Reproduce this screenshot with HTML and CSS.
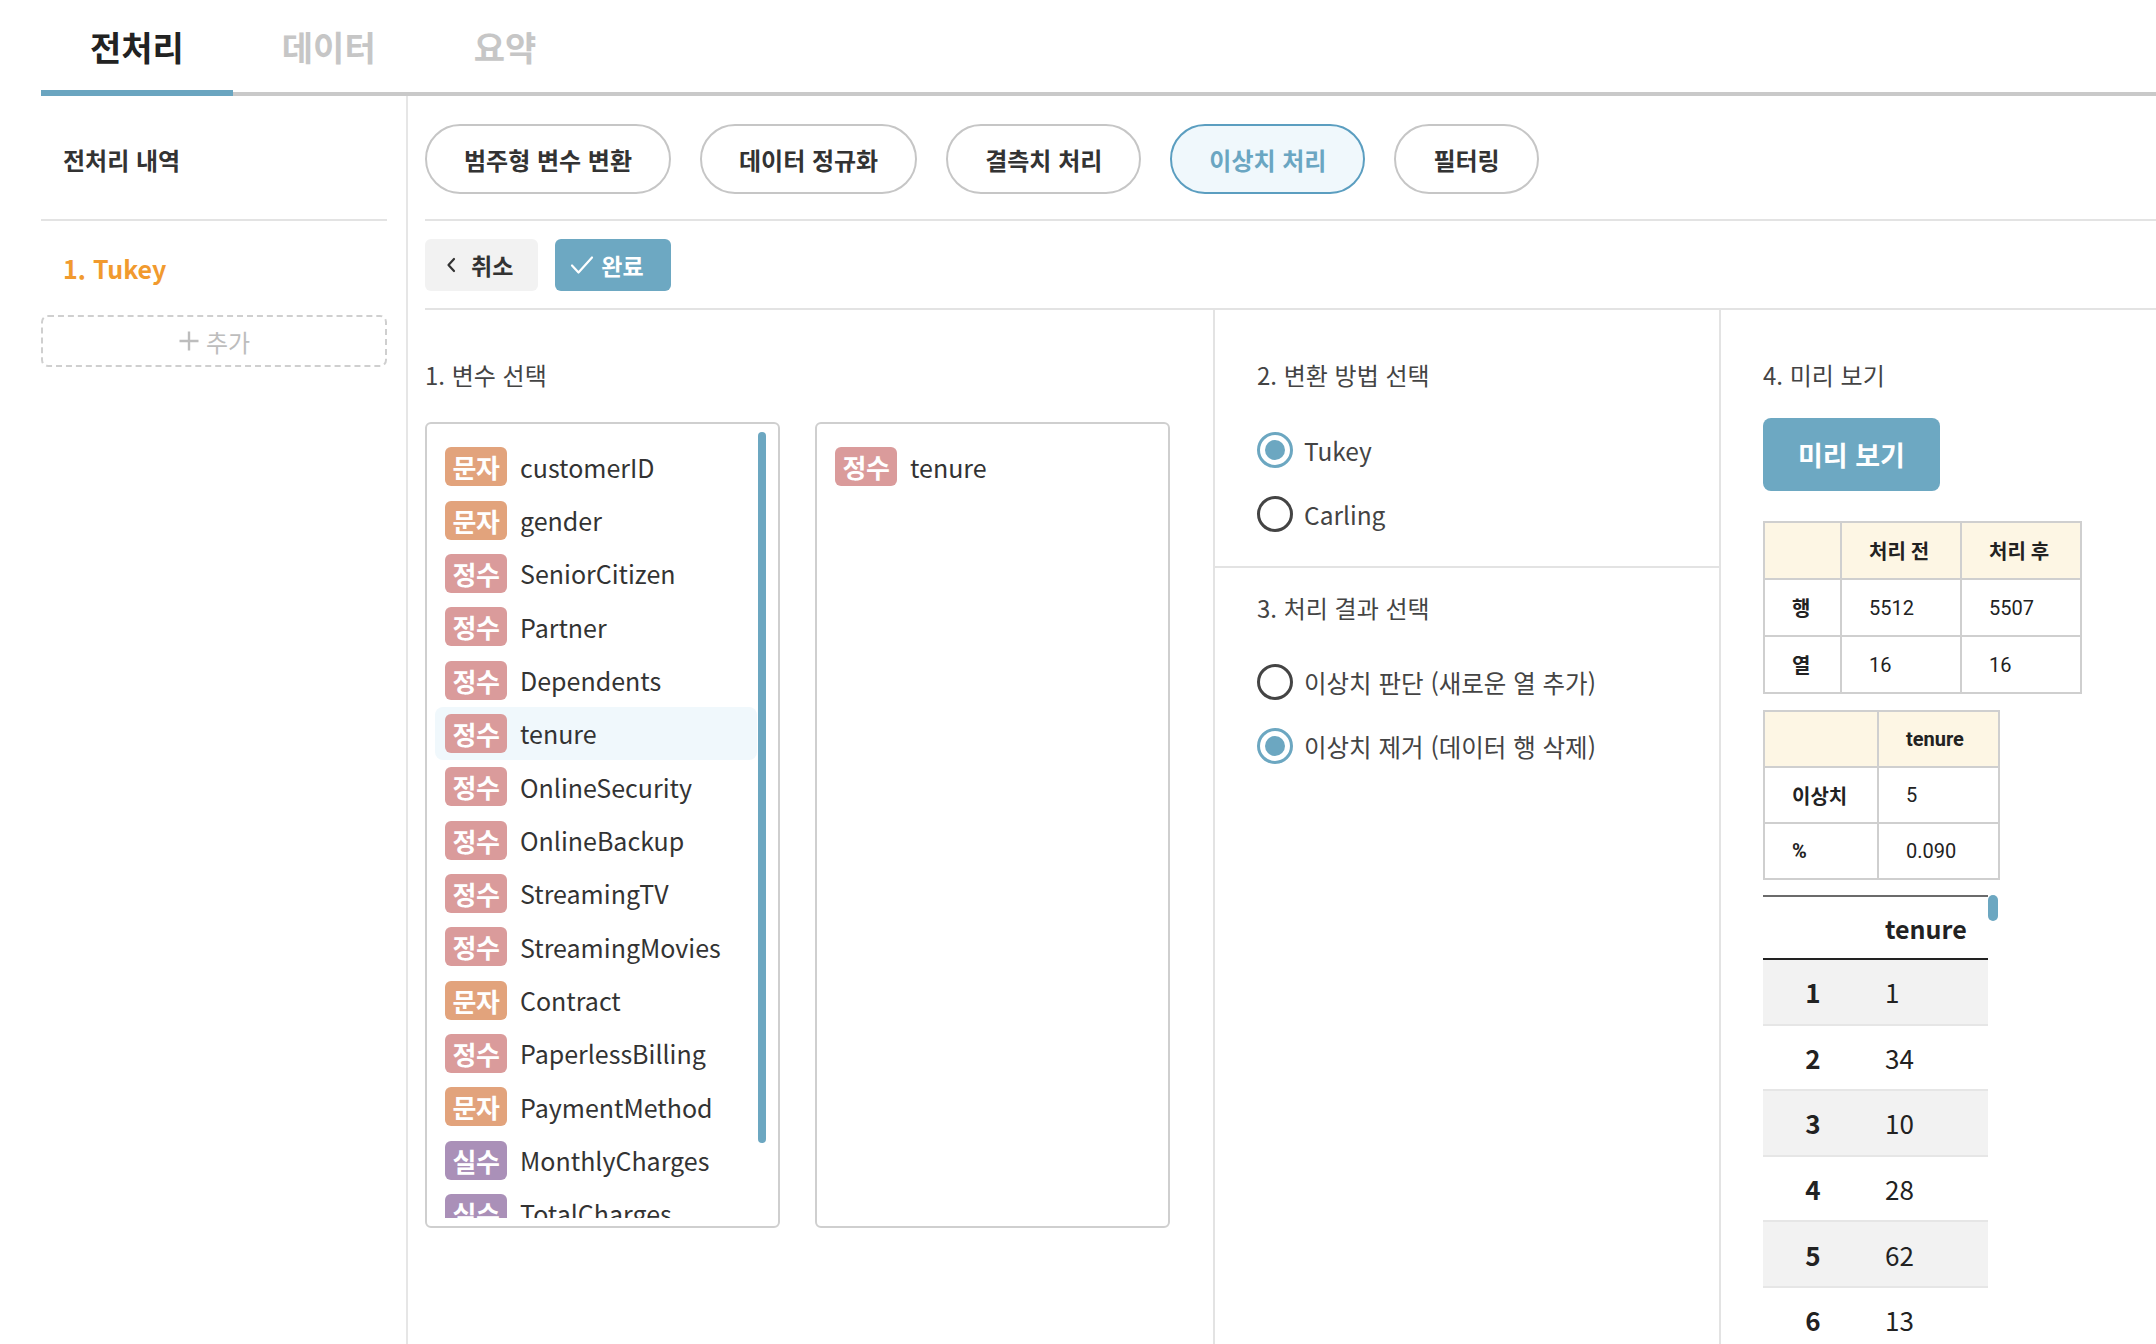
FILE: index.html
```html
<!DOCTYPE html>
<html lang="ko">
<head>
<meta charset="utf-8">
<title>전처리</title>
<link rel="stylesheet" href="styles.css">
</head>
<body>
<div class="app">
  <nav class="tabs">
    <div class="tab active">전처리</div>
    <div class="tab">데이터</div>
    <div class="tab">요약</div>
  </nav>
  <div class="body">
    <aside class="sidebar">
      <div class="side-head">전처리 내역</div>
      <div class="side-item">1. Tukey</div>
      <div class="add-box">
        <svg class="plus" width="22" height="22" viewBox="0 0 22 22"><path d="M11 1.5v19M1.5 11h19" stroke="#bdbdbd" stroke-width="2.4" fill="none"/></svg>
        <span>추가</span>
      </div>
    </aside>
    <main class="main">
      <div class="toolbar">
        <div class="pill">범주형 변수 변환</div>
        <div class="pill">데이터 정규화</div>
        <div class="pill">결측치 처리</div>
        <div class="pill active">이상치 처리</div>
        <div class="pill">필터링</div>
      </div>
      <div class="actions">
        <div class="btn btn-cancel">
          <svg width="10" height="16" viewBox="0 0 10 16"><polyline points="8,2 2.5,8 8,14" fill="none" stroke="#333" stroke-width="2.2" stroke-linecap="round" stroke-linejoin="round"/></svg>
          <span>취소</span>
        </div>
        <div class="btn btn-done">
          <svg width="24" height="20" viewBox="0 0 24 20"><polyline points="2,10.5 8.5,17.5 22,2.5" fill="none" stroke="#fff" stroke-width="2.2" stroke-linecap="round" stroke-linejoin="round"/></svg>
          <span>완료</span>
        </div>
      </div>
      <div class="columns">
        <section class="col col-vars">
          <h3 class="sec-title">1. 변수 선택</h3>
          <div class="boxes">
            <div class="vbox">
              <div class="scroller">
                <div class="vitem"><span class="badge str">문자</span><span class="vname">customerID</span></div>
                <div class="vitem"><span class="badge str">문자</span><span class="vname">gender</span></div>
                <div class="vitem"><span class="badge int">정수</span><span class="vname">SeniorCitizen</span></div>
                <div class="vitem"><span class="badge int">정수</span><span class="vname">Partner</span></div>
                <div class="vitem"><span class="badge int">정수</span><span class="vname">Dependents</span></div>
                <div class="vitem selected"><span class="badge int">정수</span><span class="vname">tenure</span></div>
                <div class="vitem"><span class="badge int">정수</span><span class="vname">OnlineSecurity</span></div>
                <div class="vitem"><span class="badge int">정수</span><span class="vname">OnlineBackup</span></div>
                <div class="vitem"><span class="badge int">정수</span><span class="vname">StreamingTV</span></div>
                <div class="vitem"><span class="badge int">정수</span><span class="vname">StreamingMovies</span></div>
                <div class="vitem"><span class="badge str">문자</span><span class="vname">Contract</span></div>
                <div class="vitem"><span class="badge int">정수</span><span class="vname">PaperlessBilling</span></div>
                <div class="vitem"><span class="badge str">문자</span><span class="vname">PaymentMethod</span></div>
                <div class="vitem"><span class="badge flt">실수</span><span class="vname">MonthlyCharges</span></div>
                <div class="vitem"><span class="badge flt">실수</span><span class="vname">TotalCharges</span></div>
                <div class="vitem"><span class="badge int">정수</span><span class="vname">Churn</span></div>
              </div>
              <div class="thumb"></div>
            </div>
            <div class="vbox">
              <div class="scroller">
                <div class="vitem"><span class="badge int">정수</span><span class="vname">tenure</span></div>
              </div>
            </div>
          </div>
        </section>
        <section class="col col-method">
          <div class="sec sec-method">
            <h3 class="sec-title">2. 변환 방법 선택</h3>
            <div class="radios">
              <div class="radio-row"><span class="radio checked"></span><span class="rlabel">Tukey</span></div>
              <div class="radio-row"><span class="radio"></span><span class="rlabel">Carling</span></div>
            </div>
          </div>
          <div class="sec sec-result">
            <h3 class="sec-title">3. 처리 결과 선택</h3>
            <div class="radios">
              <div class="radio-row"><span class="radio"></span><span class="rlabel">이상치 판단 (새로운 열 추가)</span></div>
              <div class="radio-row"><span class="radio checked"></span><span class="rlabel">이상치 제거 (데이터 행 삭제)</span></div>
            </div>
          </div>
        </section>
        <section class="col col-preview">
          <h3 class="sec-title">4. 미리 보기</h3>
          <div class="preview-btn">미리 보기</div>
          <table class="sum sum1">
            <colgroup><col class="c1"><col class="c2"><col class="c3"></colgroup>
            <tr class="head"><th></th><th>처리 전</th><th>처리 후</th></tr>
            <tr><th>행</th><td>5512</td><td>5507</td></tr>
            <tr><th>열</th><td>16</td><td>16</td></tr>
          </table>
          <table class="sum sum2">
            <colgroup><col class="d1"><col class="d2"></colgroup>
            <tr class="head"><th></th><th>tenure</th></tr>
            <tr><th>이상치</th><td>5</td></tr>
            <tr><th>%</th><td>0.090</td></tr>
          </table>
          <div class="data-wrap">
            <table class="data">
              <thead><tr><th class="idx"></th><th class="val">tenure</th></tr></thead>
              <tbody>
                <tr class="odd"><td class="idx">1</td><td class="val">1</td></tr>
                <tr><td class="idx">2</td><td class="val">34</td></tr>
                <tr class="odd"><td class="idx">3</td><td class="val">10</td></tr>
                <tr><td class="idx">4</td><td class="val">28</td></tr>
                <tr class="odd"><td class="idx">5</td><td class="val">62</td></tr>
                <tr><td class="idx">6</td><td class="val">13</td></tr>
                <tr class="odd"><td class="idx">7</td><td class="val">16</td></tr>
              </tbody>
            </table>
            <div class="dthumb"></div>
          </div>
        </section>
      </div>
    </main>
  </div>
</div>
</body>
</html>
```
FILE: styles.css
```css
* { box-sizing: border-box; }
html, body { margin: 0; padding: 0; background: #fff; }
body {
  font-family: "Noto Sans CJK KR", "Noto Sans", sans-serif;
  color: #333;
  width: 2156px;
  height: 1344px;
  overflow: hidden;
}
.app { padding-left: 41px; height: 1344px; display: flex; flex-direction: column; }

/* Tabs */
.tabs {
  display: flex;
  height: 96px;
  border-bottom: 4px solid #c9c9c9;
  flex: none;
}
.tab {
  height: 96px;
  margin-bottom: -4px;
  padding: 25px 49px 0;
  font-size: 34px;
  line-height: 44px;
  font-weight: 700;
  color: #c6c6c6;
  border-bottom: 6px solid transparent;
}
.tab.active { color: #222; border-bottom-color: #6aa5c0; }

.body { display: flex; flex: 1; min-height: 0; }

/* Sidebar */
.sidebar {
  width: 367px;
  flex: none;
  padding-right: 19px;
  border-right: 2px solid #e6e6e6;
}
.side-head {
  height: 125px;
  padding: 4px 0 0 22px;
  display: flex;
  align-items: center;
  font-size: 24px;
  font-weight: 700;
  color: #333;
  border-bottom: 2px solid #e3e3e3;
}
.side-item {
  margin-top: 28px;
  padding-left: 22px;
  line-height: 38px;
  font-size: 25px;
  font-weight: 700;
  color: #f19a2e;
}
.add-box {
  margin-top: 28px;
  height: 52px;
  border: 2px dashed #cfcfcf;
  border-radius: 7px;
  display: flex;
  align-items: center;
  justify-content: center;
  gap: 6px;
  color: #bdbdbd;
  font-size: 24px;
}

/* Main */
.main { flex: 1; padding-left: 17px; display: flex; flex-direction: column; min-width: 0; }
.toolbar {
  display: flex;
  gap: 29px;
  padding: 28px 0 25px;
  border-bottom: 2px solid #e3e3e3;
}
.pill {
  height: 70px;
  padding: 0 37px;
  border: 2px solid #c6c6c6;
  border-radius: 35px;
  display: flex;
  align-items: center;
  font-size: 24px;
  font-weight: 700;
  color: #333;
  background: #fff;
}
.pill.active { border-color: #5b9ec0; background: #f0f8fc; color: #6aa6c2; }

.actions {
  display: flex;
  gap: 17px;
  padding: 18px 0 17px;
  border-bottom: 2px solid #e3e3e3;
}
.btn {
  height: 52px;
  border-radius: 6px;
  display: flex;
  align-items: center;
  font-size: 23px;
  font-weight: 700;
}
.btn-cancel { background: #f2f2f2; color: #333; padding: 0 25px 0 21px; gap: 15px; }
.btn-done { background: #6da8c2; color: #fff; padding: 0 27px 0 15px; gap: 7px; }

/* Columns */
.columns {
  flex: 1;
  display: grid;
  grid-template-columns: 788px 506px 1fr;
  min-height: 0;
}
.col + .col { border-left: 2px solid #e3e3e3; }
.sec-title {
  margin: 0;
  font-size: 24px;
  line-height: 34px;
  font-weight: 400;
  color: #444;
}
.col-vars { padding: 48px 43px 0 0; }
.boxes { display: flex; gap: 35px; margin-top: 30px; }
.vbox {
  position: relative;
  width: 355px;
  height: 806px;
  border: 2px solid #cfcfcf;
  border-radius: 6px;
  padding: 8px;
}
.scroller {
  height: 100%;
  overflow: hidden;
  padding: 8px 13px 8px 0;
}
.vitem {
  height: 53.35px;
  display: flex;
  align-items: center;
  gap: 13px;
  padding-left: 10px;
  border-radius: 8px;
}
.vitem.selected { background: #f0f8fc; }
.badge {
  width: 62px;
  height: 39px;
  flex: none;
  border-radius: 6px;
  color: #fff;
  font-size: 26px;
  font-weight: 700;
  letter-spacing: -0.5px;
  display: flex;
  align-items: center;
  justify-content: center;
}
.badge.str { background: #e2a37c; }
.badge.int { background: #da9b9b; }
.badge.flt { background: #aa90b8; }
.vname { font-size: 25px; color: #333; white-space: nowrap; }
.thumb {
  position: absolute;
  left: 331px;
  top: 8px;
  width: 8px;
  height: 711px;
  border-radius: 4px;
  background: #6ca7c1;
}

/* Method column */
.sec { padding-left: 42px; }
.sec-method { padding-top: 48px; padding-bottom: 20px; border-bottom: 2px solid #e3e3e3; }
.sec-method .radios { margin-top: 26px; }
.sec-result { padding-top: 23px; }
.sec-result .radios { margin-top: 25px; }
.radio-row { height: 64px; display: flex; align-items: center; gap: 11px; }
.radio {
  width: 36px;
  height: 36px;
  flex: none;
  border: 3px solid #444;
  border-radius: 50%;
  display: flex;
  align-items: center;
  justify-content: center;
}
.radio.checked { border-color: #6ca7c1; }
.radio.checked::after {
  content: "";
  width: 20px;
  height: 20px;
  border-radius: 50%;
  background: #6ca7c1;
}
.rlabel { font-size: 24.5px; color: #444; }

/* Preview column */
.col-preview { padding: 48px 0 0 42px; }
.preview-btn {
  margin-top: 26px;
  width: 177px;
  height: 73px;
  border-radius: 8px;
  background: #6da8c2;
  color: #fff;
  font-size: 27px;
  font-weight: 700;
  display: flex;
  align-items: center;
  justify-content: center;
}
.sum {
  border-collapse: collapse;
  table-layout: fixed;
  font-family: Roboto, "Noto Sans CJK KR", sans-serif;
  font-size: 20px;
  color: #222;
}
.sum th, .sum td {
  border: 2px solid #cfcfcf;
  text-align: left;
  padding: 0 0 0 27px;
}
.sum th { font-weight: 700; }
.sum td { font-weight: 400; }
.sum tr.head th { background: #fdf6e4; }
.sum1 { margin-top: 30px; width: 317px; }
.sum1 tr { height: 57px; }
.sum1 .c1 { width: 77px; }
.sum1 .c2 { width: 120px; }
.sum1 .c3 { width: 120px; }
.sum2 { margin-top: 16px; width: 235px; }
.sum2 tr { height: 56px; }
.sum2 .d1 { width: 114px; }
.sum2 .d2 { width: 121px; }

.data-wrap { position: relative; margin-top: 15px; width: 225px; }
.data {
  width: 225px;
  border-collapse: collapse;
  border-top: 2px solid #6b6b6b;
  font-size: 26px;
  color: #222;
}
.data thead tr { height: 63px; }
.data thead th { border-bottom: 2px solid #222; font-weight: 700; text-align: left; font-size: 25px; }
.data tbody tr { height: 65.6px; border-bottom: 2px solid #e6e6e6; }
.data tbody tr.odd { background: #f2f2f2; }
.data .idx { width: 100px; text-align: center; font-weight: 700; }
.data .val { padding-left: 22px; text-align: left; }
.data td.val { font-weight: 400; }
.dthumb {
  position: absolute;
  left: 225px;
  top: 0;
  width: 10px;
  height: 26px;
  border-radius: 5px;
  background: #6ca7c1;
}
```
